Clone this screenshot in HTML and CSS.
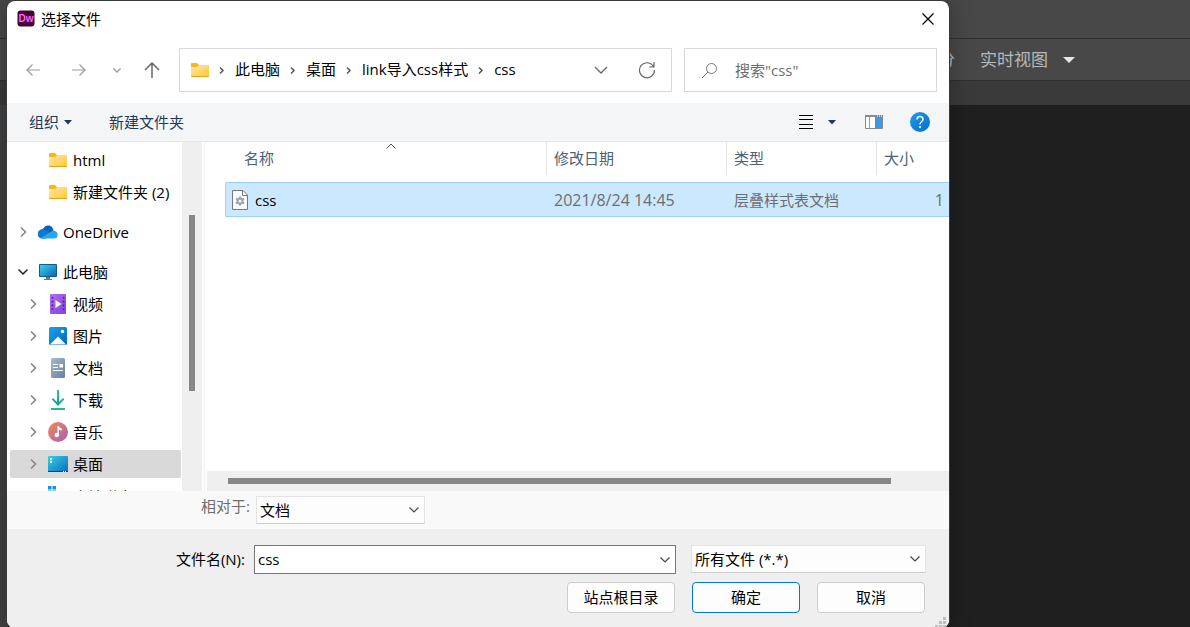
FILE: index.html
```html
<!DOCTYPE html>
<html lang="zh-CN">
<head>
<meta charset="utf-8">
<meta name="viewport" content="width=device-width, initial-scale=1">
<title>选择文件</title>
<link rel="stylesheet" href="styles.css">
</head>
<body>
<svg class="defs" aria-hidden="true">
  <defs>
    <linearGradient id="g-folder" x1="0" y1="0" x2="1" y2="1"><stop offset="0" stop-color="#ffe9a6"/><stop offset="1" stop-color="#ffc634"/></linearGradient>
    <linearGradient id="g-screen" x1="0" y1="0" x2="1" y2="1"><stop offset="0" stop-color="#35d3e4"/><stop offset="1" stop-color="#0d68c0"/></linearGradient>
    <linearGradient id="g-video" x1="0" y1="0" x2="1" y2="1"><stop offset="0" stop-color="#b16df2"/><stop offset="1" stop-color="#8041e0"/></linearGradient>
    <linearGradient id="g-photo" x1="0" y1="0" x2="1" y2="1"><stop offset="0" stop-color="#1ba1ec"/><stop offset="1" stop-color="#0565bd"/></linearGradient>
    <linearGradient id="g-doc" x1="0" y1="0" x2="1" y2="1"><stop offset="0" stop-color="#a9bbcf"/><stop offset="1" stop-color="#64809f"/></linearGradient>
    <linearGradient id="g-down" x1="0" y1="0" x2="0" y2="1"><stop offset="0" stop-color="#2ec38a"/><stop offset="1" stop-color="#129c9a"/></linearGradient>
    <linearGradient id="g-music" x1="0" y1="0" x2="1" y2="1"><stop offset="0" stop-color="#f18a52"/><stop offset="1" stop-color="#a85fb4"/></linearGradient>
    <linearGradient id="g-help" x1="0" y1="0" x2="1" y2="1"><stop offset="0" stop-color="#1e9be8"/><stop offset="1" stop-color="#0571c8"/></linearGradient>
  </defs>
  <symbol id="folder" viewBox="0 0 18 16">
    <path d="M0 2Q0 1 1 1H6L8 3H17Q18 3 18 4V8H0Z" fill="#f9b51b"/>
    <path d="M0 5H6L8 3H18V14Q18 15 17 15H1Q0 15 0 14Z" fill="url(#g-folder)"/>
    <path d="M0 14H18Q18 15 17 15H1Q0 15 0 14Z" fill="#e5a21d"/>
  </symbol>
  <symbol id="right" viewBox="0 0 10 12"><path d="M3 1.500 7.500 6 3 10.500" fill="none" stroke="currentColor" stroke-width="1.600"/></symbol>
  <symbol id="right-small" viewBox="0 0 9 11"><path d="M3 2.500 6 5.500 3 8.500" fill="none" stroke="currentColor" stroke-width="1.500"/></symbol>
  <symbol id="down" viewBox="0 0 14 8"><path d="M1 1 7 7 13 1" fill="none" stroke="currentColor" stroke-width="1.300"/></symbol>
  <symbol id="down-small" viewBox="0 0 10 6"><path d="M.5.5 5 5 9.500.5" fill="none" stroke="currentColor" stroke-width="1.200"/></symbol>
</svg>

<div class="app">
  <div class="app-menu"></div>
  <div class="app-views">
    <span class="view-split">拆分</span>
    <button class="view-live" type="button">实时视图
      <svg width="12" height="6" viewBox="0 0 12 6"><path d="M0 0H12L6 6Z" fill="#e6e6e6"/></svg>
    </button>
  </div>
  <div class="app-tabs"></div>
  <div class="app-work"></div>
</div>

<main class="dialog" role="dialog" aria-labelledby="dialog-title">
  <header class="titlebar">
    <svg width="18" height="18" viewBox="0 0 18 18"><rect x=".5" y=".5" width="17" height="16" rx="3" fill="#470137"/><text x="9" y="12" text-anchor="middle" class="logo-text">Dw</text></svg>
    <h1 id="dialog-title">选择文件</h1>
    <button class="close" type="button" aria-label="关闭"><svg width="12" height="12" viewBox="0 0 12 12"><path d="M.5.5 11.500 11.500M11.500.5.5 11.500" stroke="#000" stroke-width="1.200"/></svg></button>
  </header>

  <nav class="navrow">
    <button class="nav-btn faded" type="button" aria-label="后退"><svg width="14" height="12" viewBox="0 0 14 12"><path d="M14 6H1M6.500.5 1 6l5.500 5.500" fill="none" stroke="currentColor" stroke-width="1.200"/></svg></button>
    <button class="nav-btn faded" type="button" aria-label="前进"><svg width="14" height="12" viewBox="0 0 14 12"><path d="M0 6H13M7.500.5 13 6l-5.500 5.500" fill="none" stroke="currentColor" stroke-width="1.200"/></svg></button>
    <button class="nav-btn narrow faded" type="button" aria-label="最近位置"><svg width="8" height="5" viewBox="0 0 8 5"><path d="M.5.5 4 4 7.500.5" fill="none" stroke="currentColor" stroke-width="1.300"/></svg></button>
    <button class="nav-btn up" type="button" aria-label="上移"><svg width="16" height="16" viewBox="0 0 16 16"><path d="M8 16V1M1 8l7-7 7 7" fill="none" stroke="currentColor" stroke-width="1.500"/></svg></button>
    <div class="address">
      <svg width="18" height="16"><use href="#folder"/></svg>
      <svg class="sep" width="9" height="11"><use href="#right-small"/></svg>
      <a href="#pc">此电脑</a>
      <svg class="sep" width="9" height="11"><use href="#right-small"/></svg>
      <a href="#desktop">桌面</a>
      <svg class="sep" width="9" height="11"><use href="#right-small"/></svg>
      <a href="#link">link导入css样式</a>
      <svg class="sep" width="9" height="11"><use href="#right-small"/></svg>
      <a href="#css">css</a>
      <span class="grow"></span>
      <button class="nav-btn" type="button" aria-label="历史"><svg width="14" height="8"><use href="#down"/></svg></button>
      <button class="nav-btn" type="button" aria-label="刷新"><svg width="18" height="18" viewBox="0 0 18 18"><path d="M15.500 5.500A7.500 7.500 0 1 0 16.500 9M16 1v5h-5" fill="none" stroke="currentColor" stroke-width="1.200"/></svg></button>
    </div>
    <label class="search">
      <svg width="17" height="17" viewBox="0 0 17 17"><circle cx="10.500" cy="6.500" r="5" fill="none" stroke="#777"/><path d="M7 10 1 16" stroke="#777"/></svg>
      <input type="text" aria-label="搜索" placeholder='搜索"css"'>
    </label>
  </nav>

  <div class="toolbar">
    <button type="button">组织 <svg width="8" height="5" viewBox="0 0 8 5"><path d="M0 0H8L4 4.500Z" fill="currentColor"/></svg></button>
    <button type="button">新建文件夹</button>
    <span class="grow"></span>
    <button type="button" aria-label="视图"><svg width="14" height="14" viewBox="0 0 14 14"><path d="M0 .5H14M0 4.500H14M0 9.500H14M0 13.500H14" stroke="#000"/></svg></button>
    <button class="view-menu" type="button" aria-label="更多选项"><svg width="8" height="5" viewBox="0 0 8 5"><path d="M0 0H8L4 4.500Z" fill="currentColor"/></svg></button>
    <button class="pane-btn" type="button" aria-label="预览窗格"><svg width="18" height="14" viewBox="0 0 18 14"><path d="M.5.5H17.500V13.500H.5Z" fill="#fff" stroke="#8a8a8a"/><path d="M0 0H18V2H0Z" fill="#8a8a8a"/><path d="M12 1h1M14 1h1M16 1h1" stroke="#fff"/><path d="M4.500 2V13" stroke="#999"/><path d="M10 2H17V13H10Z" fill="#3b99e6"/></svg></button>
    <button type="button" aria-label="帮助"><svg width="20" height="20" viewBox="0 0 20 20"><circle cx="10" cy="10" r="10" fill="url(#g-help)"/><path d="M7 7.500C7 3.500 13 3.500 13 7.300 13 9.500 10 9.500 10 12.500" fill="none" stroke="#fff" stroke-width="1.500"/><circle cx="10" cy="15" r="1" fill="#fff"/></svg></button>
  </div>

  <div class="browser">
    <nav class="tree">
      <a class="child" href="#html"><span class="twist"></span><svg width="20" height="16"><use href="#folder"/></svg>html</a>
      <a class="child" href="#new"><span class="twist"></span><svg width="20" height="16"><use href="#folder"/></svg>新建文件夹 (2)</a>
      <a class="root" href="#onedrive"><svg class="twist" height="12"><use href="#right"/></svg><svg width="20" height="14" viewBox="0 0 20 14"><path d="M4 6C5 1.500 9 -.3 12 .7 14.500 1.700 15.500 4.500 15.500 6L12 10Z" fill="#0364b8"/><path d="M4.500 13.500A4.500 4.500 0 0 1 1 5.800C3 3.500 6 3.700 8 5L14 8.500 8 13.500Z" fill="#0f78d4"/><path d="M2.500 13 12 7.500C14 5 18 5 19.200 8 20.500 10.500 19 13.500 16.500 13.500H4.500Q3.500 13.500 2.500 13Z" fill="#28a8ea"/></svg>OneDrive</a>
      <a class="root" href="#pc"><svg class="twist open" height="6" viewBox="0 0 10 6"><path d="M.5.5 5 5 9.500.5" fill="none" stroke="currentColor" stroke-width="1.500"/></svg><svg width="20" height="16" viewBox="0 0 20 16"><rect x="1" width="18" height="13" rx="1" fill="#145a91"/><rect x="2" y="1" width="16" height="11" fill="url(#g-screen)"/><path d="M8 13H12V15H14V16H6V15H8Z" fill="#66798b"/></svg>此电脑</a>
      <a class="child" href="#video"><svg class="twist" height="12"><use href="#right"/></svg><svg width="20" height="20" viewBox="0 0 20 20"><rect x="2" y="0" width="16" height="20" rx="1" fill="url(#g-video)"/><path d="M4.500 3V18M15.500 3V18" stroke="#43217c" stroke-width="1.600" stroke-dasharray="1.600 2.200"/><path d="M7.500 6 13.500 10 7.500 14Z" fill="#fff"/></svg>视频</a>
      <a class="child" href="#pictures"><svg class="twist" height="12"><use href="#right"/></svg><svg width="20" height="18" viewBox="0 0 20 18"><rect x="1" width="18" height="18" rx="1.500" fill="url(#g-photo)"/><path d="M2 17.500 10 9.500 18 17.500Z" fill="#fff"/><circle cx="14.500" cy="4.500" r="1.700" fill="#fff"/></svg>图片</a>
      <a class="child" href="#docs"><svg class="twist" height="12"><use href="#right"/></svg><svg width="20" height="20" viewBox="0 0 20 20"><rect x="3" width="14" height="20" rx="1.500" fill="url(#g-doc)"/><path d="M5 6.500H10M5 9.500H10M5 12.500H15" stroke="#fff"/><path d="M11.500 6H15V9.500H11.500Z" fill="#fff"/></svg>文档</a>
      <a class="child" href="#downloads"><svg class="twist" height="12"><use href="#right"/></svg><svg width="20" height="20" viewBox="0 0 20 20"><path d="M9 0H11V12L15 8 16.300 9.300 10 16 3.700 9.300 5 8 9 12Z" fill="url(#g-down)"/><path d="M3 18H17V20H3Z" fill="#26b98c"/></svg>下载</a>
      <a class="child" href="#music"><svg class="twist" height="12"><use href="#right"/></svg><svg width="20" height="20" viewBox="0 0 20 20"><circle cx="10" cy="10" r="10" fill="url(#g-music)"/><circle cx="8.700" cy="13" r="2.200" fill="#fff"/><path d="M9.500 4H10.800Q11.500 6 13.800 6.500V8.500Q12 8.500 10.900 7.500V13H9.500Z" fill="#fff"/></svg>音乐</a>
      <a class="child selected" href="#desktop"><svg class="twist" height="12"><use href="#right"/></svg><svg width="20" height="16" viewBox="0 0 20 16"><rect width="20" height="16" rx="1" fill="url(#g-screen)"/><path d="M2 2h2v2H2ZM2 5h2v2H2Z" fill="#fff"/><path d="M0 15.500H20" stroke="#064a78"/><path d="M15 15.500h1M17 15.500h1" stroke="#fff"/></svg>桌面</a>
      <a class="child last" href="#disk"><span class="twist"></span><svg width="20" height="22" viewBox="0 0 20 22"><path d="M0 0H3.500V3.500H0ZM4.500 0H8V3.500H4.500ZM0 4.500H3.500V8H0ZM4.500 4.500H8V8H4.500Z" fill="#1593dc"/><rect y="12" width="20" height="6" fill="#8b929a"/></svg>本地磁盘</a>
    </nav>
    <div class="vscroll"><div class="vthumb"></div></div>
    <section class="files">
      <table>
        <colgroup><col><col class="c-date"><col class="c-type"><col class="c-size"></colgroup>
        <thead>
          <tr>
            <th class="name"><div>名称</div><svg class="sort" width="10" height="6" viewBox="0 0 10 6"><path d="M.5 5.500 5 1 9.500 5.500" fill="none" stroke="#555"/></svg></th>
            <th><div>修改日期</div></th><th><div>类型</div></th><th><div>大小</div></th>
          </tr>
        </thead>
        <tbody>
          <tr>
            <td class="file"><div><svg width="16" height="20" viewBox="0 0 16 20"><path d="M.5.5H11L15.500 5V19.500H.5Z" fill="#fafafa" stroke="#777"/><path d="M10.500.5V5.500H15.500" fill="none" stroke="#777"/><circle cx="8" cy="11" r="2.500" fill="none" stroke="#98a3b0" stroke-width="2"/><path d="M8 6.500V8M8 14V15.500M4 8.700 5.400 9.500M10.600 12.500 12 13.300M4 13.300 5.400 12.500M10.600 9.500 12 8.700" stroke="#98a3b0" stroke-width="2"/></svg>css</div></td>
            <td class="number">2021/8/24 14:45</td><td>层叠样式表文档</td><td class="number size">1</td>
          </tr>
        </tbody>
      </table>
      <div class="hscroll"><div class="hthumb"></div></div>
    </section>
  </div>

  <div class="relative-row">
    <label for="relative">相对于:</label>
    <div class="combo relative-combo"><select id="relative"><option>文档</option></select><svg width="10" height="6"><use href="#down-small"/></svg></div>
  </div>

  <footer class="footer">
    <label for="filename">文件名(N):</label>
    <div class="combo filename"><input id="filename" type="text" value="css"><svg width="10" height="6"><use href="#down-small"/></svg></div>
    <div class="combo"><select aria-label="文件类型"><option>所有文件 (*.*)</option></select><svg width="10" height="6"><use href="#down-small"/></svg></div>
    <div class="actions">
      <button type="button">站点根目录</button>
      <button class="primary" type="button">确定</button>
      <button type="button">取消</button>
    </div>
    <svg class="grip" width="11" height="11" viewBox="0 0 11 11"><path d="M8 0h3v3H8ZM8 4h3v3H8ZM4 4h3v3H4ZM8 8h3v3H8ZM4 8h3v3H4ZM0 8h3v3H0Z" fill="#bdbdbd"/></svg>
  </footer>
</main>
</body>
</html>
```
FILE: styles.css
```css
* { box-sizing: border-box; }

body {
  margin: 0;
  min-height: 100vh;
  position: relative;
  overflow: hidden;
  background: #1f1f1f;
  color: #000;
  font: 15px/20px "Open Sans", "Noto Sans CJK SC", sans-serif;
}

button, input, select {
  margin: 0;
  padding: 0;
  border: 0;
  background: none;
  color: inherit;
  font: inherit;
}

a { color: inherit; text-decoration: none; }
svg { display: block; flex: none; }
h1 { margin: 0; font-size: 15px; font-weight: 400; }
.defs { position: absolute; width: 0; height: 0; }
.grow { flex: 1; }

/* editor behind the dialog */
.app { display: flex; flex-direction: column; height: 100vh; }
.app-menu { height: 39px; background: #484848; border-bottom: 1px solid #303030; }
.app-views {
  display: flex;
  align-items: center;
  justify-content: flex-end;
  gap: 25px;
  height: 42px;
  padding-right: 115px;
  background: #484848;
  border-bottom: 1px solid #303030;
  color: #b8b8b8;
  font-size: 17px;
}
.view-live { display: flex; align-items: center; gap: 15px; }
.app-tabs { height: 24px; background: #3a3a3a; }
.app-work { flex: 1; border-left: 8px solid #414141; }

/* dialog window */
.dialog {
  position: absolute;
  top: 1px;
  left: 7px;
  right: 241px;
  overflow: hidden;
  border-radius: 8px;
  background: #fff;
  box-shadow: 0 0 0 1px #3a3a3a, 0 0 24px rgba(0, 0, 0, .3);
}

.titlebar { display: flex; align-items: center; gap: 6px; height: 36px; padding: 0 8px 0 10px; }
.logo-text { fill: #ff61f6; font: 700 10px "Liberation Sans", sans-serif; }
.close { display: grid; place-items: center; width: 26px; height: 26px; margin-left: auto; }

.navrow { display: flex; align-items: center; padding: 11px 12px 11px 3px; }
.nav-btn { display: grid; place-items: center; width: 46px; height: 42px; color: #666; }
.nav-btn.narrow { width: 30px; }
.nav-btn.up { width: 40px; margin-right: 7px; }
.nav-btn.faded { color: #999; }
.address {
  display: flex;
  flex: 1;
  align-items: center;
  height: 44px;
  padding: 0 1px 0 11px;
  border: 1px solid #d9d9d9;
}
.address a { margin-bottom: 2px; }
.sep { margin: 0 9px 0 8px; color: #555; }
.search {
  display: flex;
  align-items: center;
  gap: 17px;
  width: 253px;
  height: 44px;
  margin-left: 12px;
  padding: 0 16px;
  border: 1px solid #d9d9d9;
}
.search input { flex: 1; min-width: 0; outline: 0; }
.search input::placeholder { color: #6d6d6d; opacity: 1; }

.toolbar {
  display: flex;
  align-items: center;
  height: 39px;
  padding: 0 19px 0 22px;
  background: #f4f5f7;
  border-bottom: 1px solid #e5e7ea;
  color: #1e395b;
}
.toolbar button { display: flex; align-items: center; gap: 5px; }
.toolbar button + button { margin-left: 37px; }
.toolbar .view-menu.view-menu { margin-left: 15px; }
.toolbar .pane-btn.pane-btn { margin-left: 29px; }
.toolbar .pane-btn + button { margin-left: 27px; }

/* folder tree and file list */
.browser { display: flex; height: 349px; }
.tree {
  display: flex;
  flex-direction: column;
  gap: 4px;
  width: 175px;
  padding: 4px 1px 0 3px;
  overflow: hidden;
}
.tree a {
  display: flex;
  flex: none;
  align-items: center;
  gap: 5px;
  height: 28px;
  border-radius: 2px;
  white-space: nowrap;
}
.tree .child { padding-left: 18px; }
.tree .root { margin-top: 8px; padding-left: 8px; }
.tree .last { margin-top: 1px; }
.twist { width: 10px; margin-right: 5px; color: #868686; }
.twist.open { color: #222; }
.tree .selected { background: #d9d9d9; }

.vscroll { width: 20px; padding: 73px 7px 0; background: #efefef; }
.vthumb { height: 176px; background: #868686; }

.files {
  display: flex;
  flex: 1;
  flex-direction: column;
  justify-content: space-between;
  min-width: 0;
  margin-left: 2px;
  border-left: 1px solid #f0f0f0;
}
table { margin-left: 20px; table-layout: fixed; border-spacing: 0; }
.c-date { width: 180px; }
.c-type { width: 150px; }
.c-size { width: 73px; }
th { position: relative; height: 40px; padding: 0; vertical-align: top; color: #4c607a; font-weight: 400; text-align: left; }
th div { height: 33px; padding: 6px 0 0 7px; border-left: 1px solid #e5e5e5; }
.name div { padding-left: 19px; border-left: 0; }
.sort { position: absolute; top: 1px; left: 161px; }
td {
  height: 35px;
  padding: 0 8px;
  background: #cce8ff;
  border: solid #99d1ff;
  border-width: 1px 0;
  color: #6d6d6d;
  white-space: nowrap;
}
.file { padding-left: 6px; border-left-width: 1px; border-radius: 2px 0 0 2px; color: #000; }
.file div { display: flex; align-items: center; gap: 7px; }
.number { font-size: 16px; }
.size { padding-right: 5px; text-align: right; }

.hscroll { height: 20px; margin-left: 2px; padding: 7px 58px 0 21px; background: #efefef; }
.hthumb { height: 6px; background: #868686; }

/* form */
.combo {
  display: grid;
  align-items: center;
  height: 28px;
  background: #fdfdfd;
  border: 1px solid #e3e3e3;
  border-bottom-color: #ccc;
}
.combo > * { grid-area: 1 / 1; }
.combo select, .combo input { width: 100%; height: 100%; padding-left: 3px; outline: 0; appearance: none; }
.combo svg { justify-self: end; margin-right: 5px; color: #444; pointer-events: none; }
.relative-row {
  display: flex;
  gap: 6px;
  height: 38px;
  padding: 5px 0 0 194px;
  background: #f9f9f9;
  color: #6d6d6d;
}
.relative-combo { width: 169px; color: #000; }

.footer {
  position: relative;
  display: grid;
  grid-template-columns: 238px 1fr 235px;
  column-gap: 15px;
  row-gap: 8px;
  padding: 16px 23px 15px 0;
  background: #efefef;
}
.footer label { height: 28px; line-height: 28px; text-align: right; }
.filename { height: 29px; margin-left: -6px; background: #fff; border-color: #777; }
.filename input { padding-bottom: 2px; }
.actions { display: flex; grid-column: 1 / -1; justify-content: flex-end; gap: 17px; padding-right: 1px; }
.actions button { width: 108px; height: 31px; padding-bottom: 2px; background: #fdfdfd; border: 1px solid #ccc; border-radius: 4px; }
.actions .primary { border-color: #0078d4; }
.grip { position: absolute; right: 3px; bottom: 0; }
```
